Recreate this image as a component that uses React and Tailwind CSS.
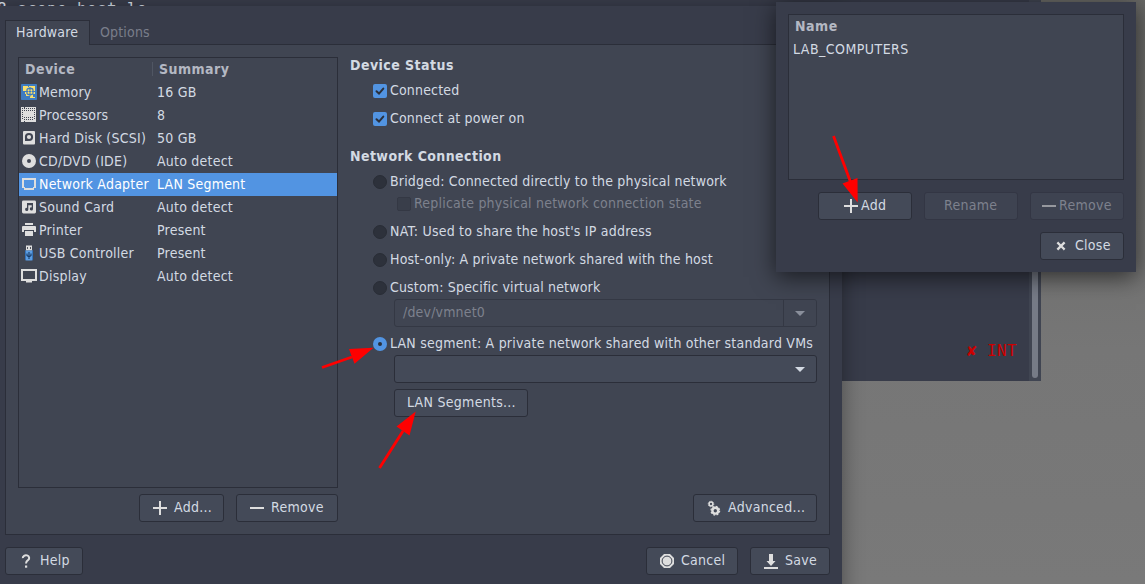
import clsx from "clsx";

const UI_FONT = "font-['DejaVu_Sans_Condensed','DejaVu_Sans',sans-serif]";

function Glyph({ children, className }) {
  return (
    <svg viewBox="0 0 16 16" width="16" height="16" fill="#dedede" className={clsx("block shrink-0", className)}>
      {children}
    </svg>
  );
}

const icons = {
  memory: (
    <>
      <rect width="16" height="16" rx="0.8" fill="#3f7cc0" />
      <path d="M2 2h5v1h1v-1h6v12h-5v-2h-4v-2h-1v-3h-2z" fill="#fbe06c" />
      <path d="M12 10h2v3h-2z" fill="#3f7cc0" />
      <rect x="6" y="4.500" width="6" height="6" rx="1.500" fill="none" stroke="#3f7cc0" strokeWidth="1.300" />
      <path d="M9 3v3M9 9v3.500M4 7.500h3.500M10.500 7.500h3.500M2 7.500h2" fill="none" stroke="#3f7cc0" strokeWidth="1.100" />
      <rect x="8" y="6.500" width="2" height="2" fill="#3f7cc0" />
    </>
  ),
  cpu: (
    <>
      <path d="M0 0h3v1h1v-1h11v15h-11v-1h-1v1h-3z" />
      <path d="M1.500 2v12M3.500 2v3M3.500 11v3M5.500 2v3M5.500 11v3M7.500 2v3M7.500 11v3M9.500 2v3M9.500 11v3M11.500 2v3M11.500 11v3M13.500 2v12" stroke="#404552" strokeWidth="1" strokeDasharray="1 1" fill="none" transform="translate(0 -1)" />
    </>
  ),
  disk: (
    <>
      <rect x="2" y="1" width="12" height="13.600" rx="1" />
      <circle cx="8" cy="7" r="4.100" fill="#404552" />
      <path d="M4 7v4h4z" fill="#404552" />
      <circle cx="8" cy="7" r="2.100" />
    </>
  ),
  disc: <path fillRule="evenodd" d="M8 1a7 7 0 1 0 0 14a7 7 0 0 0 0-14zM8 6a2 2 0 1 1 0 4a2 2 0 0 1 0-4z" />,
  net: <path fillRule="evenodd" d="M1 2h14v10h-2v2h-10v-2h-2zM3 4v7h1v1h8v-1h1v-7z" />,
  sound: (
    <>
      <rect x="1" y="1.500" width="14" height="13" rx="1.400" />
      <path d="M6 4h6v6a1.600 1.600 0 1 1-1.300-1.600v-2.200h-3.400v4.300a1.600 1.600 0 1 1-1.300-1.600z" fill="#404552" />
    </>
  ),
  printer: <path d="M4 1h8v2h-8zM1 5q0-1 1-1h12q1 0 1 1v5h-2v-2h-10v2h-2zM4 9h8v5h-8z" />,
  usb: (
    <>
      <path d="M5 0.500h6v5h-6z" fill="#dedede" />
      <path d="M6 2h1v2h-1zM9 2h1v2h-1z" fill="#555761" />
      <path d="M4 5.500h8v8.500q0 1.500-1.500 1.500h-5q-1.500 0-1.500-1.500z" fill="#5b9de3" />
      <path d="M4 5.500h0.800v9.500h-0.800zM11.200 5.500h0.800v9.500h-0.800z" fill="#2d6bb0" />
      <path d="M8 7v7M6 8.500v2l2 1.500 2-1.500v-2" fill="none" stroke="#173a66" strokeWidth="1.100" />
    </>
  ),
  display: <path fillRule="evenodd" d="M0 1h16v12h-5v1.500h-6v-1.500h-5zM2 3v8h12v-8z" />,
  plus: <path d="M7 1h2v6h6v2h-6v6h-2v-6h-6v-2h6z" />,
  minus: <path d="M1 7h14v2h-14z" />,
  help: (
    <>
      <path d="M4.800 5.200a3.200 2.700 0 1 1 5.400 1.700q-2.200 1.600-2.200 3.600" fill="none" stroke="#dedede" strokeWidth="2" />
      <rect x="7" y="12.500" width="2.200" height="2.200" />
    </>
  ),
  gears: (
    <>
      <circle cx="5" cy="4" r="1.900" fill="none" stroke="#dedede" strokeWidth="1.500" />
      <circle cx="5" cy="4" r="2.800" fill="none" stroke="#dedede" strokeWidth="0.800" strokeDasharray="1.200 1" />
      <circle cx="9.300" cy="10.700" r="2.900" fill="none" stroke="#dedede" strokeWidth="2.400" />
      <circle cx="9.300" cy="10.700" r="4.300" fill="none" stroke="#dedede" strokeWidth="1.300" strokeDasharray="1.800 1.577" />
    </>
  ),
  cancel: (
    <>
      <path d="M5 1h6l4 4v6l-4 4h-6l-4-4v-6z" />
      <circle cx="8" cy="8" r="4.900" fill="none" stroke="#404552" strokeWidth="1" />
    </>
  ),
  save: <path d="M6 1h4v7h2.500l-4.500 5-4.500-5h2.500zM1 14h14v2h-14z" />,
  close: <path d="M5.200 5.200l5.600 5.600M10.800 5.200l-5.600 5.600" stroke="#dedede" strokeWidth="2.300" strokeLinecap="square" />,
};

function Button({ icon, children, className, disabled }) {
  return (
    <button
      className={clsx(
        "flex h-7 shrink-0 items-center whitespace-nowrap rounded-[3px] border pb-0.5 tracking-[0.28px]",
        disabled ? "border-[#333644] bg-[#3e4351] text-[#7d818d]" : "border-[#2b2e39] bg-[#444a58] text-[#d3dae3]",
        className
      )}
    >
      {icon && <Glyph className={clsx("relative top-px", disabled && "opacity-55")}>{icons[icon]}</Glyph>}
      <span>{children}</span>
    </button>
  );
}

const devices = [
  ["memory", "Memory", "16 GB"],
  ["cpu", "Processors", "8"],
  ["disk", "Hard Disk (SCSI)", "50 GB"],
  ["disc", "CD/DVD (IDE)", "Auto detect"],
  ["net", "Network Adapter", "LAN Segment"],
  ["sound", "Sound Card", "Auto detect"],
  ["printer", "Printer", "Present"],
  ["usb", "USB Controller", "Present"],
  ["display", "Display", "Auto detect"],
];

function DeviceList() {
  return (
    <div className="h-[431px] w-[320px] border border-[#2b2e39] bg-[#404552]">
      <div className="flex h-[23px] items-center pb-px font-bold tracking-[0.45px] text-[#b4b8c3]">
        <span className="w-[134px] border-r border-[#505663] pl-[6px] leading-[14px]">Device</span>
        <span className="pl-[6px]">Summary</span>
      </div>
      {devices.map(([icon, name, summary]) => (
        <div key={name} className={clsx("flex h-[23px] items-center pb-px pl-[2px] tracking-[0.22px]", icon === "net" && "bg-[#5294e2] text-white")}>
          <Glyph>{icons[icon]}</Glyph>
          <span className="ml-[2px] w-[118px] whitespace-nowrap">{name}</span>
          <span>{summary}</span>
        </div>
      ))}
    </div>
  );
}

function Check({ label, disabled, className }) {
  return (
    <label className={clsx("flex items-center gap-[3px]", className)}>
      <span className={clsx("relative top-px flex size-[14px] items-center justify-center rounded-[2px]", disabled ? "border border-[#343844] bg-[#393e4a]" : "bg-[#5294e2]")}>
        {!disabled && (
          <svg width="14" height="14" viewBox="0 0 14 14" fill="none">
            <path d="M3.500 7.300l2.500 2.300 4.300-5" stroke="#2b303b" strokeWidth="2" strokeLinecap="round" />
          </svg>
        )}
      </span>
      <span className={disabled ? "text-[#7d818d]" : ""}>{label}</span>
    </label>
  );
}

function Radio({ label, checked, className }) {
  return (
    <label className={clsx("flex h-7 items-center gap-[3px] whitespace-nowrap pl-[23px]", className)}>
      <span className={clsx("relative top-px flex size-[14px] items-center justify-center rounded-full", checked ? "bg-[#5294e2]" : "border border-[#292d36] bg-[#2d313b]")}>
        {checked && <span className="size-1 rounded-full bg-[#2b303b]" />}
      </span>
      <span>{label}</span>
    </label>
  );
}

function Caret({ color }) {
  return (
    <svg width="10" height="6" viewBox="0 0 10 6" fill={color}>
      <path d="M0 1h10l-5 5z" />
    </svg>
  );
}

function NetworkSettings() {
  return (
    <div className="flex flex-col">
      <h3 className="flex h-4 items-center font-bold tracking-[0.45px]">Device Status</h3>
      <Check label="Connected" className="mt-[3px] h-7 pl-[23px]" />
      <Check label="Connect at power on" className="h-7 pl-[23px]" />
      <h3 className="mt-3 flex h-6 items-center font-bold tracking-[0.41px]">Network Connection</h3>
      <Radio label="Bridged: Connected directly to the physical network" className="-mt-px" />
      <Check label="Replicate physical network connection state" disabled className="-mt-0.5 h-5 pl-[47px] tracking-[0.22px]" />
      <Radio label="NAT: Used to share the host's IP address" className="mt-1 tracking-[0.22px]" />
      <Radio label="Host-only: A private network shared with the host" className="tracking-[0.2px]" />
      <Radio label="Custom: Specific virtual network" />
      <div className="-mt-0.5 ml-11 flex h-7 rounded-[3px] border border-[#343844] text-[#7d818d]">
        <span className="flex flex-1 items-center border-r border-[#343844] pb-0.5 pl-2">/dev/vmnet0</span>
        <span className="flex w-8 items-center justify-center rounded-r-[2px] bg-[#404552]"><Caret color="#8a8f9b" /></span>
      </div>
      <Radio label="LAN segment: A private network shared with other standard VMs" checked className="mt-0.5 tracking-[0.21px]" />
      <div className="-mt-0.5 ml-11 flex h-7 items-center justify-end rounded-[3px] border border-[#2b2e39] bg-[#444a58] pr-[11px]">
        <Caret color="#d3dae3" />
      </div>
      <Button className="ml-11 mt-1.5 w-[134px] pl-3">LAN Segments...</Button>
    </div>
  );
}

function SettingsWindow() {
  return (
    <section className="absolute left-0 top-[6px] flex h-[590px] w-[842px] flex-col bg-[#383c4a] pl-[5px] pr-3 pt-[14px] shadow-[0_4px_20px_rgba(0,0,0,0.4)]">
      <nav className="z-10 -mb-px flex h-[25px]">
        <div className="flex w-[85px] items-center border border-b-0 border-[#2b2e39] bg-[#404552] pb-0.5 pl-[10px]">Hardware</div>
        <div className="flex items-center pb-px pl-[10px] text-[#7a7e8a]">Options</div>
      </nav>
      <div className="flex h-[491px] flex-col border border-[#2b2e39] bg-[#404552] px-3 pt-3">
        <div className="flex gap-3">
          <DeviceList />
          <div className="h-[431px] w-[467px] shrink-0"><NetworkSettings /></div>
        </div>
        <div className="mt-1.5 flex">
          <Button icon="plus" className="ml-[121px] w-[85px] gap-1.5 pl-3">Add...</Button>
          <Button icon="minus" className="ml-3 w-[102px] gap-1.5 pl-3">Remove</Button>
          <Button icon="gears" className="ml-auto w-[124px] gap-1.5 pl-3">Advanced...</Button>
        </div>
      </div>
      <footer className="mt-3 flex gap-3">
        <Button icon="help" className="mr-auto w-[78px] gap-1.5 pl-3">Help</Button>
        <Button icon="cancel" className="w-[92px] gap-1.5 pl-3">Cancel</Button>
        <Button icon="save" className="w-[80px] gap-1.5 pl-3">Save</Button>
      </footer>
    </section>
  );
}

function SegmentsDialog() {
  return (
    <section className="absolute left-[776px] top-[2px] flex h-[270px] w-[360px] flex-col bg-[#383c4a] p-3 shadow-[0_5px_22px_rgba(0,0,0,0.6)]">
      <div className="h-[166px] border border-[#2b2e39] bg-[#404552]">
        <div className="flex h-[23px] items-center pb-px pl-[6px] font-bold tracking-[0.5px] text-[#b4b8c3]">Name</div>
        <div className="flex h-[23px] items-center pb-px pl-1 tracking-[0.47px]">LAB_COMPUTERS</div>
      </div>
      <div className="mt-3 flex justify-end gap-3">
        <Button icon="plus" className="w-[94px] gap-[2px] pl-6">Add</Button>
        <Button disabled className="w-[94px] pl-[19px]">Rename</Button>
        <Button icon="minus" disabled className="w-[94px] gap-[2px] pl-[10px]">Remove</Button>
      </div>
      <div className="mt-3 flex justify-end">
        <Button icon="close" className="w-[84px] gap-1.5 pl-3">Close</Button>
      </div>
    </section>
  );
}

function TerminalWindow() {
  return (
    <section className="absolute left-0 top-0 flex h-[381px] w-[1041px] bg-[#383c4a] font-['DejaVu_Sans_Mono',monospace] text-[16px] leading-[16px] tracking-[0.37px]">
      <div className="relative flex-1">
        <span className="absolute -left-[3px] top-px whitespace-pre">8 scope host lo</span>
        <span className="absolute left-[967px] top-[343px] whitespace-pre text-[#cc0000]">✘ INT</span>
      </div>
      <div className="flex w-3 bg-[#404552] pb-[3px] pl-[3px] pt-1">
        <div className="w-1.5 rounded-full bg-[#767b87]" />
      </div>
    </section>
  );
}

function Arrows() {
  return (
    <svg className="pointer-events-none absolute inset-0" width="1145" height="584" fill="#ff0000" stroke="none">
      <path d="M322 367.500L352 357M379.500 468L403 431M833.500 136L850.500 182" stroke="#ff0000" strokeWidth="2.800" />
      <path d="M373.500 347.700L349 349L354.500 363.700zM415.700 411.500L396.500 426.500L409.500 435.500zM857.700 202.500L842.500 183.500L857.500 178z" />
    </svg>
  );
}

export default function App() {
  return (
    <main className={clsx("relative h-[584px] w-[1145px] overflow-hidden bg-linear-to-b from-[#686865] via-[#767676] via-60% to-[#797979] text-[14px] leading-[18px] tracking-[0.17px] text-[#d3dae3]", UI_FONT)}>
      <TerminalWindow />
      <SettingsWindow />
      <SegmentsDialog />
      <Arrows />
    </main>
  );
}
